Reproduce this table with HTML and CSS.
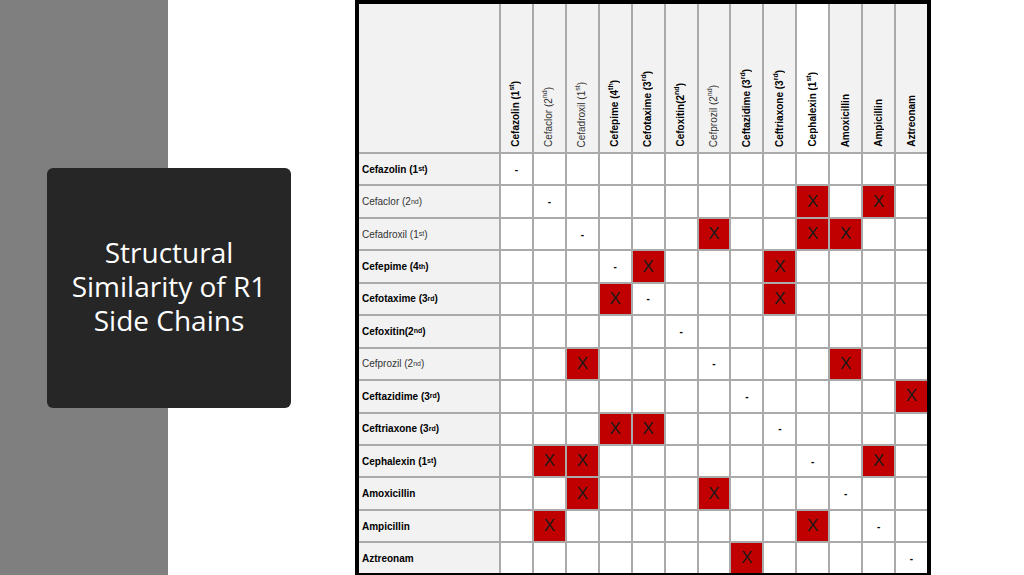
FILE: index.html
```html
<!DOCTYPE html>
<html>
<head>
<meta charset="utf-8">
<link rel="stylesheet" href="styles.css">
</head>
<body>
<div class="page">
  <div class="side">
    <div class="titlebox"><h1>Structural<br>Similarity of R1<br>Side Chains</h1></div>
  </div>
  <div class="table">
    <div class="corner"></div>
    <div class="h b"><span>Cefazolin (1<sup>st</sup>)</span></div>
    <div class="h"><span>Cefaclor (2<sup>nd</sup>)</span></div>
    <div class="h"><span>Cefadroxil (1<sup>st</sup>)</span></div>
    <div class="h b"><span>Cefepime (4<sup>th</sup>)</span></div>
    <div class="h b"><span>Cefotaxime (3<sup>rd</sup>)</span></div>
    <div class="h b"><span>Cefoxitin(2<sup>nd</sup>)</span></div>
    <div class="h"><span>Cefprozil (2<sup>nd</sup>)</span></div>
    <div class="h b"><span>Ceftazidime (3<sup>rd</sup>)</span></div>
    <div class="h b"><span>Ceftriaxone (3<sup>rd</sup>)</span></div>
    <div class="h b white"><span>Cephalexin (1<sup>st</sup>)</span></div>
    <div class="h b"><span>Amoxicillin</span></div>
    <div class="h b"><span>Ampicillin</span></div>
    <div class="h b"><span>Aztreonam</span></div>

    <div class="lbl b">Cefazolin (1<sup>st</sup>)</div>
    <div class="c d">-</div><div class="c"></div><div class="c"></div><div class="c"></div><div class="c"></div><div class="c"></div><div class="c"></div><div class="c"></div><div class="c"></div><div class="c"></div><div class="c"></div><div class="c"></div><div class="c"></div>

    <div class="lbl">Cefaclor (2<sup>nd</sup>)</div>
    <div class="c"></div><div class="c d">-</div><div class="c"></div><div class="c"></div><div class="c"></div><div class="c"></div><div class="c"></div><div class="c"></div><div class="c"></div><div class="c x">X</div><div class="c"></div><div class="c x">X</div><div class="c"></div>

    <div class="lbl">Cefadroxil (1<sup>st</sup>)</div>
    <div class="c"></div><div class="c"></div><div class="c d">-</div><div class="c"></div><div class="c"></div><div class="c"></div><div class="c x">X</div><div class="c"></div><div class="c"></div><div class="c x">X</div><div class="c x">X</div><div class="c"></div><div class="c"></div>

    <div class="lbl b">Cefepime (4<sup>th</sup>)</div>
    <div class="c"></div><div class="c"></div><div class="c"></div><div class="c d">-</div><div class="c x">X</div><div class="c"></div><div class="c"></div><div class="c"></div><div class="c x">X</div><div class="c"></div><div class="c"></div><div class="c"></div><div class="c"></div>

    <div class="lbl b">Cefotaxime (3<sup>rd</sup>)</div>
    <div class="c"></div><div class="c"></div><div class="c"></div><div class="c x">X</div><div class="c d">-</div><div class="c"></div><div class="c"></div><div class="c"></div><div class="c x">X</div><div class="c"></div><div class="c"></div><div class="c"></div><div class="c"></div>

    <div class="lbl b">Cefoxitin(2<sup>nd</sup>)</div>
    <div class="c"></div><div class="c"></div><div class="c"></div><div class="c"></div><div class="c"></div><div class="c d">-</div><div class="c"></div><div class="c"></div><div class="c"></div><div class="c"></div><div class="c"></div><div class="c"></div><div class="c"></div>

    <div class="lbl">Cefprozil (2<sup>nd</sup>)</div>
    <div class="c"></div><div class="c"></div><div class="c x">X</div><div class="c"></div><div class="c"></div><div class="c"></div><div class="c d">-</div><div class="c"></div><div class="c"></div><div class="c"></div><div class="c x">X</div><div class="c"></div><div class="c"></div>

    <div class="lbl b">Ceftazidime (3<sup>rd</sup>)</div>
    <div class="c"></div><div class="c"></div><div class="c"></div><div class="c"></div><div class="c"></div><div class="c"></div><div class="c"></div><div class="c d">-</div><div class="c"></div><div class="c"></div><div class="c"></div><div class="c"></div><div class="c x">X</div>

    <div class="lbl b">Ceftriaxone (3<sup>rd</sup>)</div>
    <div class="c"></div><div class="c"></div><div class="c"></div><div class="c x">X</div><div class="c x">X</div><div class="c"></div><div class="c"></div><div class="c"></div><div class="c d">-</div><div class="c"></div><div class="c"></div><div class="c"></div><div class="c"></div>

    <div class="lbl b">Cephalexin (1<sup>st</sup>)</div>
    <div class="c"></div><div class="c x">X</div><div class="c x">X</div><div class="c"></div><div class="c"></div><div class="c"></div><div class="c"></div><div class="c"></div><div class="c"></div><div class="c d">-</div><div class="c"></div><div class="c x">X</div><div class="c"></div>

    <div class="lbl b">Amoxicillin</div>
    <div class="c"></div><div class="c"></div><div class="c x">X</div><div class="c"></div><div class="c"></div><div class="c"></div><div class="c x">X</div><div class="c"></div><div class="c"></div><div class="c"></div><div class="c d">-</div><div class="c"></div><div class="c"></div>

    <div class="lbl b">Ampicillin</div>
    <div class="c"></div><div class="c x">X</div><div class="c"></div><div class="c"></div><div class="c"></div><div class="c"></div><div class="c"></div><div class="c"></div><div class="c"></div><div class="c x">X</div><div class="c"></div><div class="c d">-</div><div class="c"></div>

    <div class="lbl b">Aztreonam</div>
    <div class="c"></div><div class="c"></div><div class="c"></div><div class="c"></div><div class="c"></div><div class="c"></div><div class="c"></div><div class="c x">X</div><div class="c"></div><div class="c"></div><div class="c"></div><div class="c"></div><div class="c d">-</div>
  </div>
</div>
</body>
</html>
```
FILE: styles.css
```css
html, body {
  margin: 0;
  padding: 0;
  width: 1024px;
  height: 575px;
  overflow: hidden;
  background: #ffffff;
}

.page {
  display: flex;
  width: 1024px;
  height: 575px;
  align-items: flex-start;
}

.side {
  width: 355px;
  height: 575px;
  flex: none;
  display: flex;
  align-items: center;
  padding-left: 47px;
  box-sizing: border-box;
  background: linear-gradient(to right, #7f7f7f 0, #7f7f7f 168px, #ffffff 168px);
}

.titlebox {
  width: 244px;
  height: 240px;
  box-sizing: border-box;
  padding-bottom: 4px;
  background: #262626;
  border-radius: 6px;
  display: flex;
  align-items: center;
  justify-content: center;
}

.titlebox h1 {
  margin: 0;
  font-family: "Open Sans", "DejaVu Sans", sans-serif;
  font-weight: 400;
  font-size: 28px;
  line-height: 34px;
  color: #ffffff;
  text-align: center;
}

.table {
  flex: none;
  width: 576px;
  height: 577px;
  box-sizing: border-box;
  border: 4px solid #000000;
  background: #aaaaaa;
  display: grid;
  grid-template-columns: 140px repeat(13, 1fr);
  grid-template-rows: 148px repeat(12, 30.45px) 1fr;
  gap: 2px;
  font-family: "Liberation Sans", Arial, sans-serif;
  font-size: 10px;
  color: #333333;
}

.table sup {
  font-size: 7px;
  line-height: 0;
  vertical-align: super;
}

.b {
  font-weight: 700;
  color: #000000;
}

.corner {
  background: #f2f2f2;
}

.h {
  background: #f2f2f2;
  display: flex;
  justify-content: center;
  align-items: flex-end;
  padding-bottom: 5px;
  box-sizing: border-box;
}

.h.white {
  background: #ffffff;
}

.h span {
  writing-mode: vertical-rl;
  transform: rotate(180deg);
  white-space: nowrap;
  line-height: 12px;
}

.lbl {
  background: #f2f2f2;
  display: flex;
  align-items: center;
  padding-left: 3px;
  white-space: nowrap;
}

.c {
  background: #ffffff;
  display: flex;
  align-items: center;
  justify-content: center;
}

.d {
  font-weight: 700;
  color: #000000;
  font-size: 10px;
}

.x {
  background: #c00000;
  color: #1a1a1a;
  font-size: 17px;
}
```
